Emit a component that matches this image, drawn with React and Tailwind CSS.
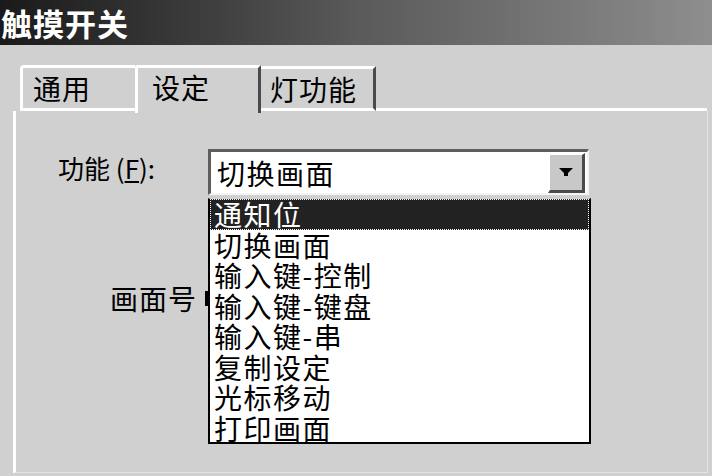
import React from "react";

const items = ["通知位", "切换画面", "输入键-控制", "输入键-键盘", "输入键-串", "复制设定", "光标移动", "打印画面"];

export default function App() {
  return (
    <div
      className="w-[712px] h-[476px] bg-[#d0d0d0] overflow-hidden text-black"
      style={{ fontFamily: '"Noto Sans CJK SC", "Noto Sans", sans-serif' }}
    >
      {/* title bar */}
      <div className="h-[45px] flex items-center pl-[1px] bg-gradient-to-r from-[#1a1a1a] via-[#5a5a5a] to-[#8e8e8e]">
        <span className="text-white font-bold text-[31px] leading-none tracking-[1px]">触摸开关</span>
      </div>

      {/* tabs */}
      <div className="flex items-end h-[66px] pl-[20px] relative z-10">
        <div className="w-[115px] h-[46px] border-l-[3px] border-t-[3px] border-white rounded-tl-[4px] flex items-center pl-[10px] text-[28px] leading-none tracking-[1px] border-b-[3px] border-b-white">
          通用
        </div>
        <div className="w-[126px] h-[48px] -mb-[2px] bg-[#d0d0d0] border-l-[3px] border-t-[3px] border-white border-r-[3px] border-r-[#4a4a4a] rounded-tl-[3px] flex items-start pt-[5px] pl-[14px] text-[28px] leading-none tracking-[1px]">
          设定
        </div>
        <div className="w-[115px] h-[45px] border-t-[3px] border-white border-r-[3px] border-r-[#4a4a4a] border-b-[3px] border-b-white flex items-center pl-[9px] text-[28px] leading-none tracking-[1px]">
          灯功能
        </div>
        <div className="flex-1 h-[3px] bg-white mr-[5px]" />
      </div>

      {/* panel */}
      <div className="relative ml-[13px] w-[695px] h-[362px] border-l-[3px] border-white border-b border-b-[#e4e4e4] border-r border-r-[#e4e4e4]">
        <div className="flex items-center pt-[38px]">
          <div className="w-[192px] pl-[42px] pb-[8px] text-[26px] leading-none whitespace-nowrap">
            功能 (<span className="underline underline-offset-2">F</span>):
          </div>
          <div className="w-[381px] h-[46px] border-t-[3px] border-l-[3px] border-[#5e5e5e] border-b-[2px] border-r-[2px] border-b-[#f4f4f4] border-r-[#f4f4f4] bg-white flex items-center justify-between pl-[6px] pr-[2px]">
            <span className="text-[28px] leading-none tracking-[1.5px]">切换画面</span>
            <div className="w-[37px] h-[40px] bg-[#c8c8c8] border-t-[2px] border-l-[2px] border-white border-b-[3px] border-r-[3px] border-b-[#4a4a4a] border-r-[#4a4a4a] flex items-center justify-center">
              <svg width="14" height="8" viewBox="0 0 14 8">
                <polygon points="0,0 14,0 9,5 9,8 5,8 5,5" fill="#000" />
              </svg>
            </div>
          </div>
        </div>

        <div className="flex items-center mt-[89px]">
          <div className="w-[181px] text-right text-[28px] leading-none tracking-[1px]">画面号</div>
          <div className="ml-[8px] w-[5px] h-[15px] bg-black" />
        </div>

        {/* dropdown list overlay */}
        <div className="absolute left-[192px] top-[87px] w-[383px] h-[246px] bg-white border-[2px] border-black border-t-[#d0d0d0] border-t-[1px]">
          {items.map((t, i) => (
            <div
              key={t}
              className={
                i === 0
                  ? "h-[30.5px] bg-[#222] text-white border border-dotted border-white flex items-center pl-[3px] text-[28px] leading-none tracking-[1.5px]"
                  : "h-[30.5px] flex items-center pl-[4px] text-[28px] leading-none tracking-[1.5px]"
              }
            >
              {t}
            </div>
          ))}
        </div>
      </div>
    </div>
  );
}
